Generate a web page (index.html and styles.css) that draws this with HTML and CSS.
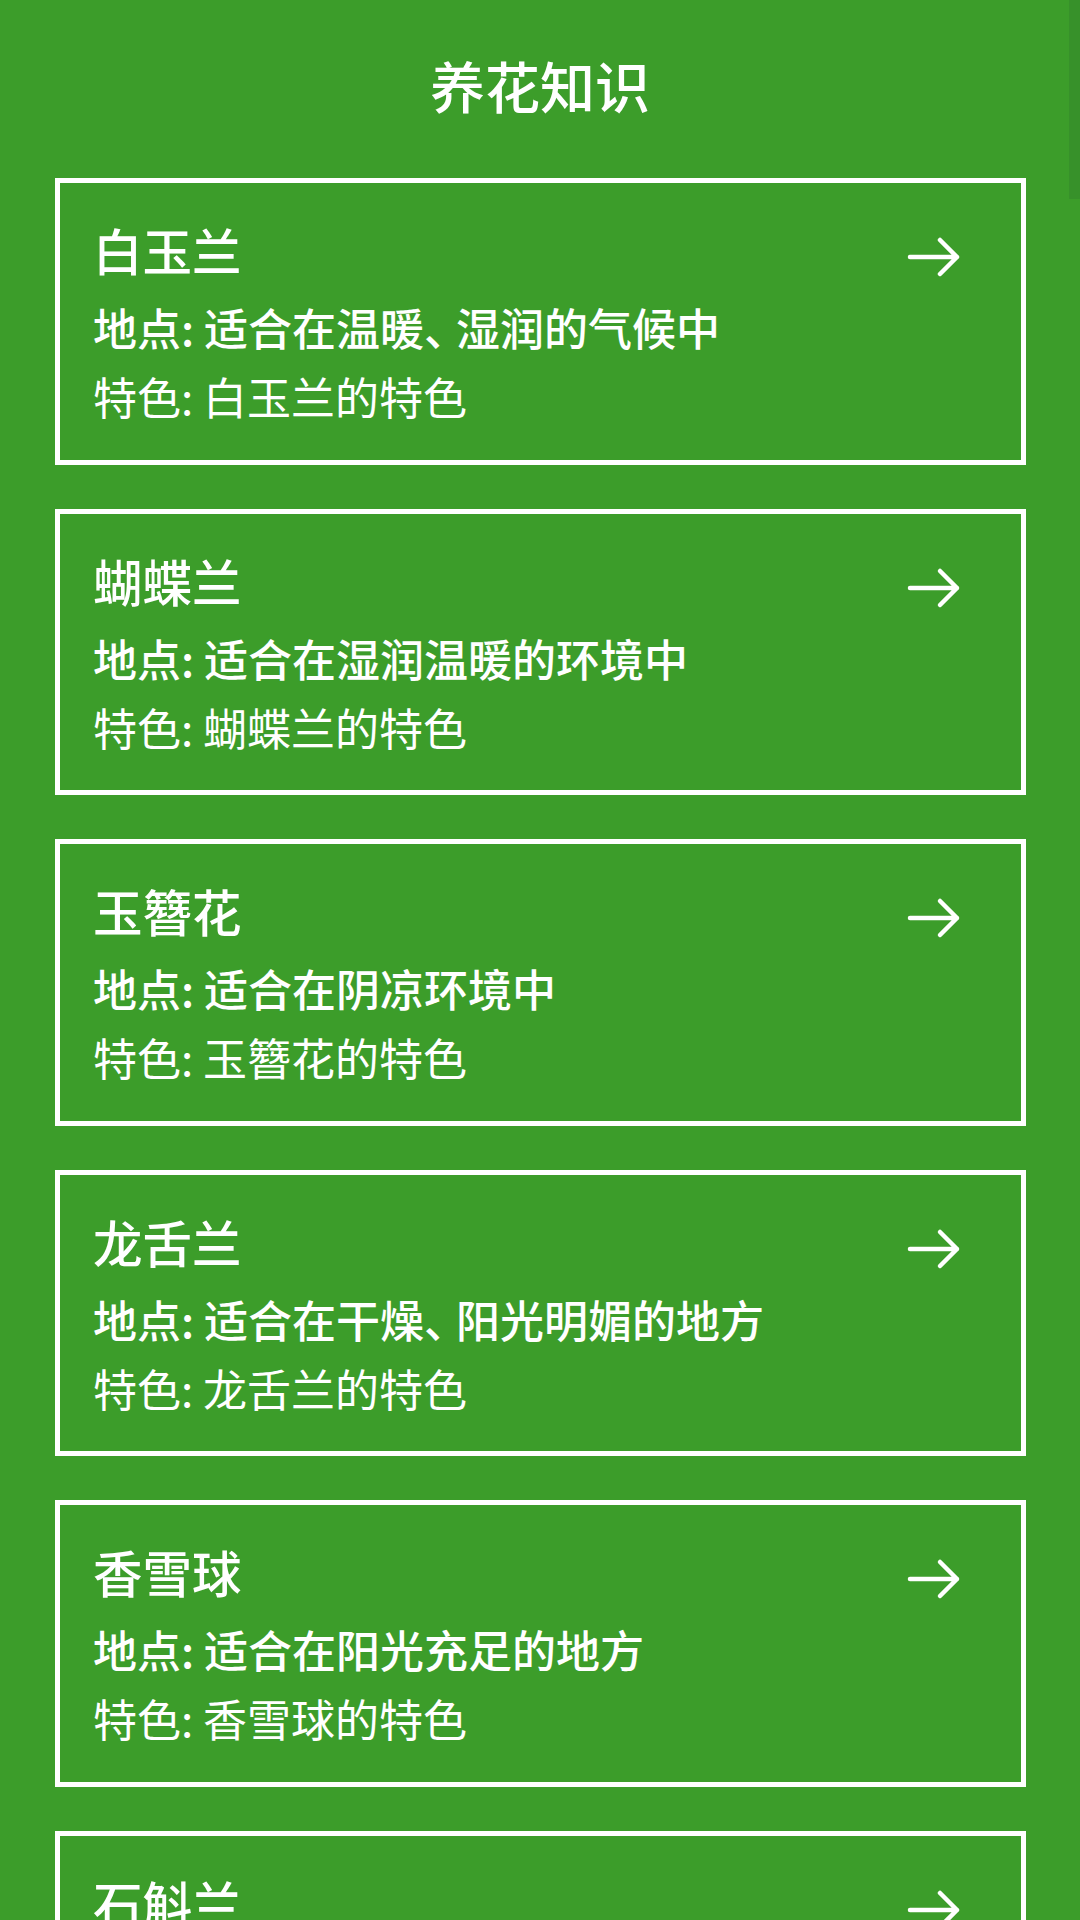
FILE: index.html
```html
<!DOCTYPE html>
<html lang="zh-CN">
<head>
<meta charset="utf-8">
<title>养花知识</title>
<link rel="stylesheet" href="styles.css">
</head>
<body>
<div class="scroll-indicator"></div>
<header class="header"><h1 class="page-title">养花知识</h1></header>
<main class="list">
  <section class="card">
    <div class="card-head"><h2 class="card-title">白玉兰</h2><svg class="arrow" viewBox="0 0 56 44" width="56" height="44"><path d="M5 22 H52 M35 5 L52 22 L35 39" fill="none" stroke="#fff" stroke-width="4.5" stroke-linecap="round" stroke-linejoin="round"/></svg></div>
    <p class="card-place">地点: 适合在温暖<span class="punct">、</span>湿润的气候中</p>
    <p class="card-feature">特色: 白玉兰的特色</p>
  </section>
  <section class="card">
    <div class="card-head"><h2 class="card-title">蝴蝶兰</h2><svg class="arrow" viewBox="0 0 56 44" width="56" height="44"><path d="M5 22 H52 M35 5 L52 22 L35 39" fill="none" stroke="#fff" stroke-width="4.5" stroke-linecap="round" stroke-linejoin="round"/></svg></div>
    <p class="card-place">地点: 适合在湿润温暖的环境中</p>
    <p class="card-feature">特色: 蝴蝶兰的特色</p>
  </section>
  <section class="card">
    <div class="card-head"><h2 class="card-title">玉簪花</h2><svg class="arrow" viewBox="0 0 56 44" width="56" height="44"><path d="M5 22 H52 M35 5 L52 22 L35 39" fill="none" stroke="#fff" stroke-width="4.5" stroke-linecap="round" stroke-linejoin="round"/></svg></div>
    <p class="card-place">地点: 适合在阴凉环境中</p>
    <p class="card-feature">特色: 玉簪花的特色</p>
  </section>
  <section class="card">
    <div class="card-head"><h2 class="card-title">龙舌兰</h2><svg class="arrow" viewBox="0 0 56 44" width="56" height="44"><path d="M5 22 H52 M35 5 L52 22 L35 39" fill="none" stroke="#fff" stroke-width="4.5" stroke-linecap="round" stroke-linejoin="round"/></svg></div>
    <p class="card-place">地点: 适合在干燥<span class="punct">、</span>阳光明媚的地方</p>
    <p class="card-feature">特色: 龙舌兰的特色</p>
  </section>
  <section class="card">
    <div class="card-head"><h2 class="card-title">香雪球</h2><svg class="arrow" viewBox="0 0 56 44" width="56" height="44"><path d="M5 22 H52 M35 5 L52 22 L35 39" fill="none" stroke="#fff" stroke-width="4.5" stroke-linecap="round" stroke-linejoin="round"/></svg></div>
    <p class="card-place">地点: 适合在阳光充足的地方</p>
    <p class="card-feature">特色: 香雪球的特色</p>
  </section>
  <section class="card">
    <div class="card-head"><h2 class="card-title">石斛兰</h2><svg class="arrow" viewBox="0 0 56 44" width="56" height="44"><path d="M5 22 H52 M35 5 L52 22 L35 39" fill="none" stroke="#fff" stroke-width="4.5" stroke-linecap="round" stroke-linejoin="round"/></svg></div>
    <p class="card-place">地点: 适合在温暖湿润的环境中</p>
    <p class="card-feature">特色: 石斛兰的特色</p>
  </section>
</main>
</body>
</html>
```
FILE: styles.css
```css
html, body {
  margin: 0;
  padding: 0;
  height: 1920px;
  overflow: hidden;
}
body {
  background: #3c9d2a;
  color: #fff;
  font-family: "Noto Sans CJK SC", "Noto Sans", sans-serif;
  position: relative;
}
.scroll-indicator {
  position: absolute;
  top: 0;
  right: 0;
  width: 11px;
  height: 199px;
  background: #37912a;
}
.header {
  padding-top: 44px;
  margin-bottom: 54px;
  text-align: center;
}
.page-title {
  margin: 0;
  font-size: 55px;
  line-height: 80px;
  font-weight: 500;
}
.list {
  display: flex;
  flex-direction: column;
  gap: 44px;
  padding: 0 54px 0 55px;
}
.card {
  border: 5px solid #fff;
  padding: 37px 33px 28.5px 33px;
}
.card-head {
  display: flex;
  align-items: center;
  justify-content: space-between;
  height: 60px;
  margin-bottom: 13px;
}
.card-title {
  margin: 0;
  font-size: 49.5px;
  line-height: 60px;
  font-weight: 500;
}
.arrow {
  display: block;
  margin-right: 27px;
  margin-top: 14px;
}
.card-place,
.card-feature {
  margin: 0;
  font-size: 44px;
  line-height: 69px;
}
.card-place {
  font-weight: 500;
}
.card-feature {
  font-weight: 400;
}
.punct {
  letter-spacing: -12px;
}
```
